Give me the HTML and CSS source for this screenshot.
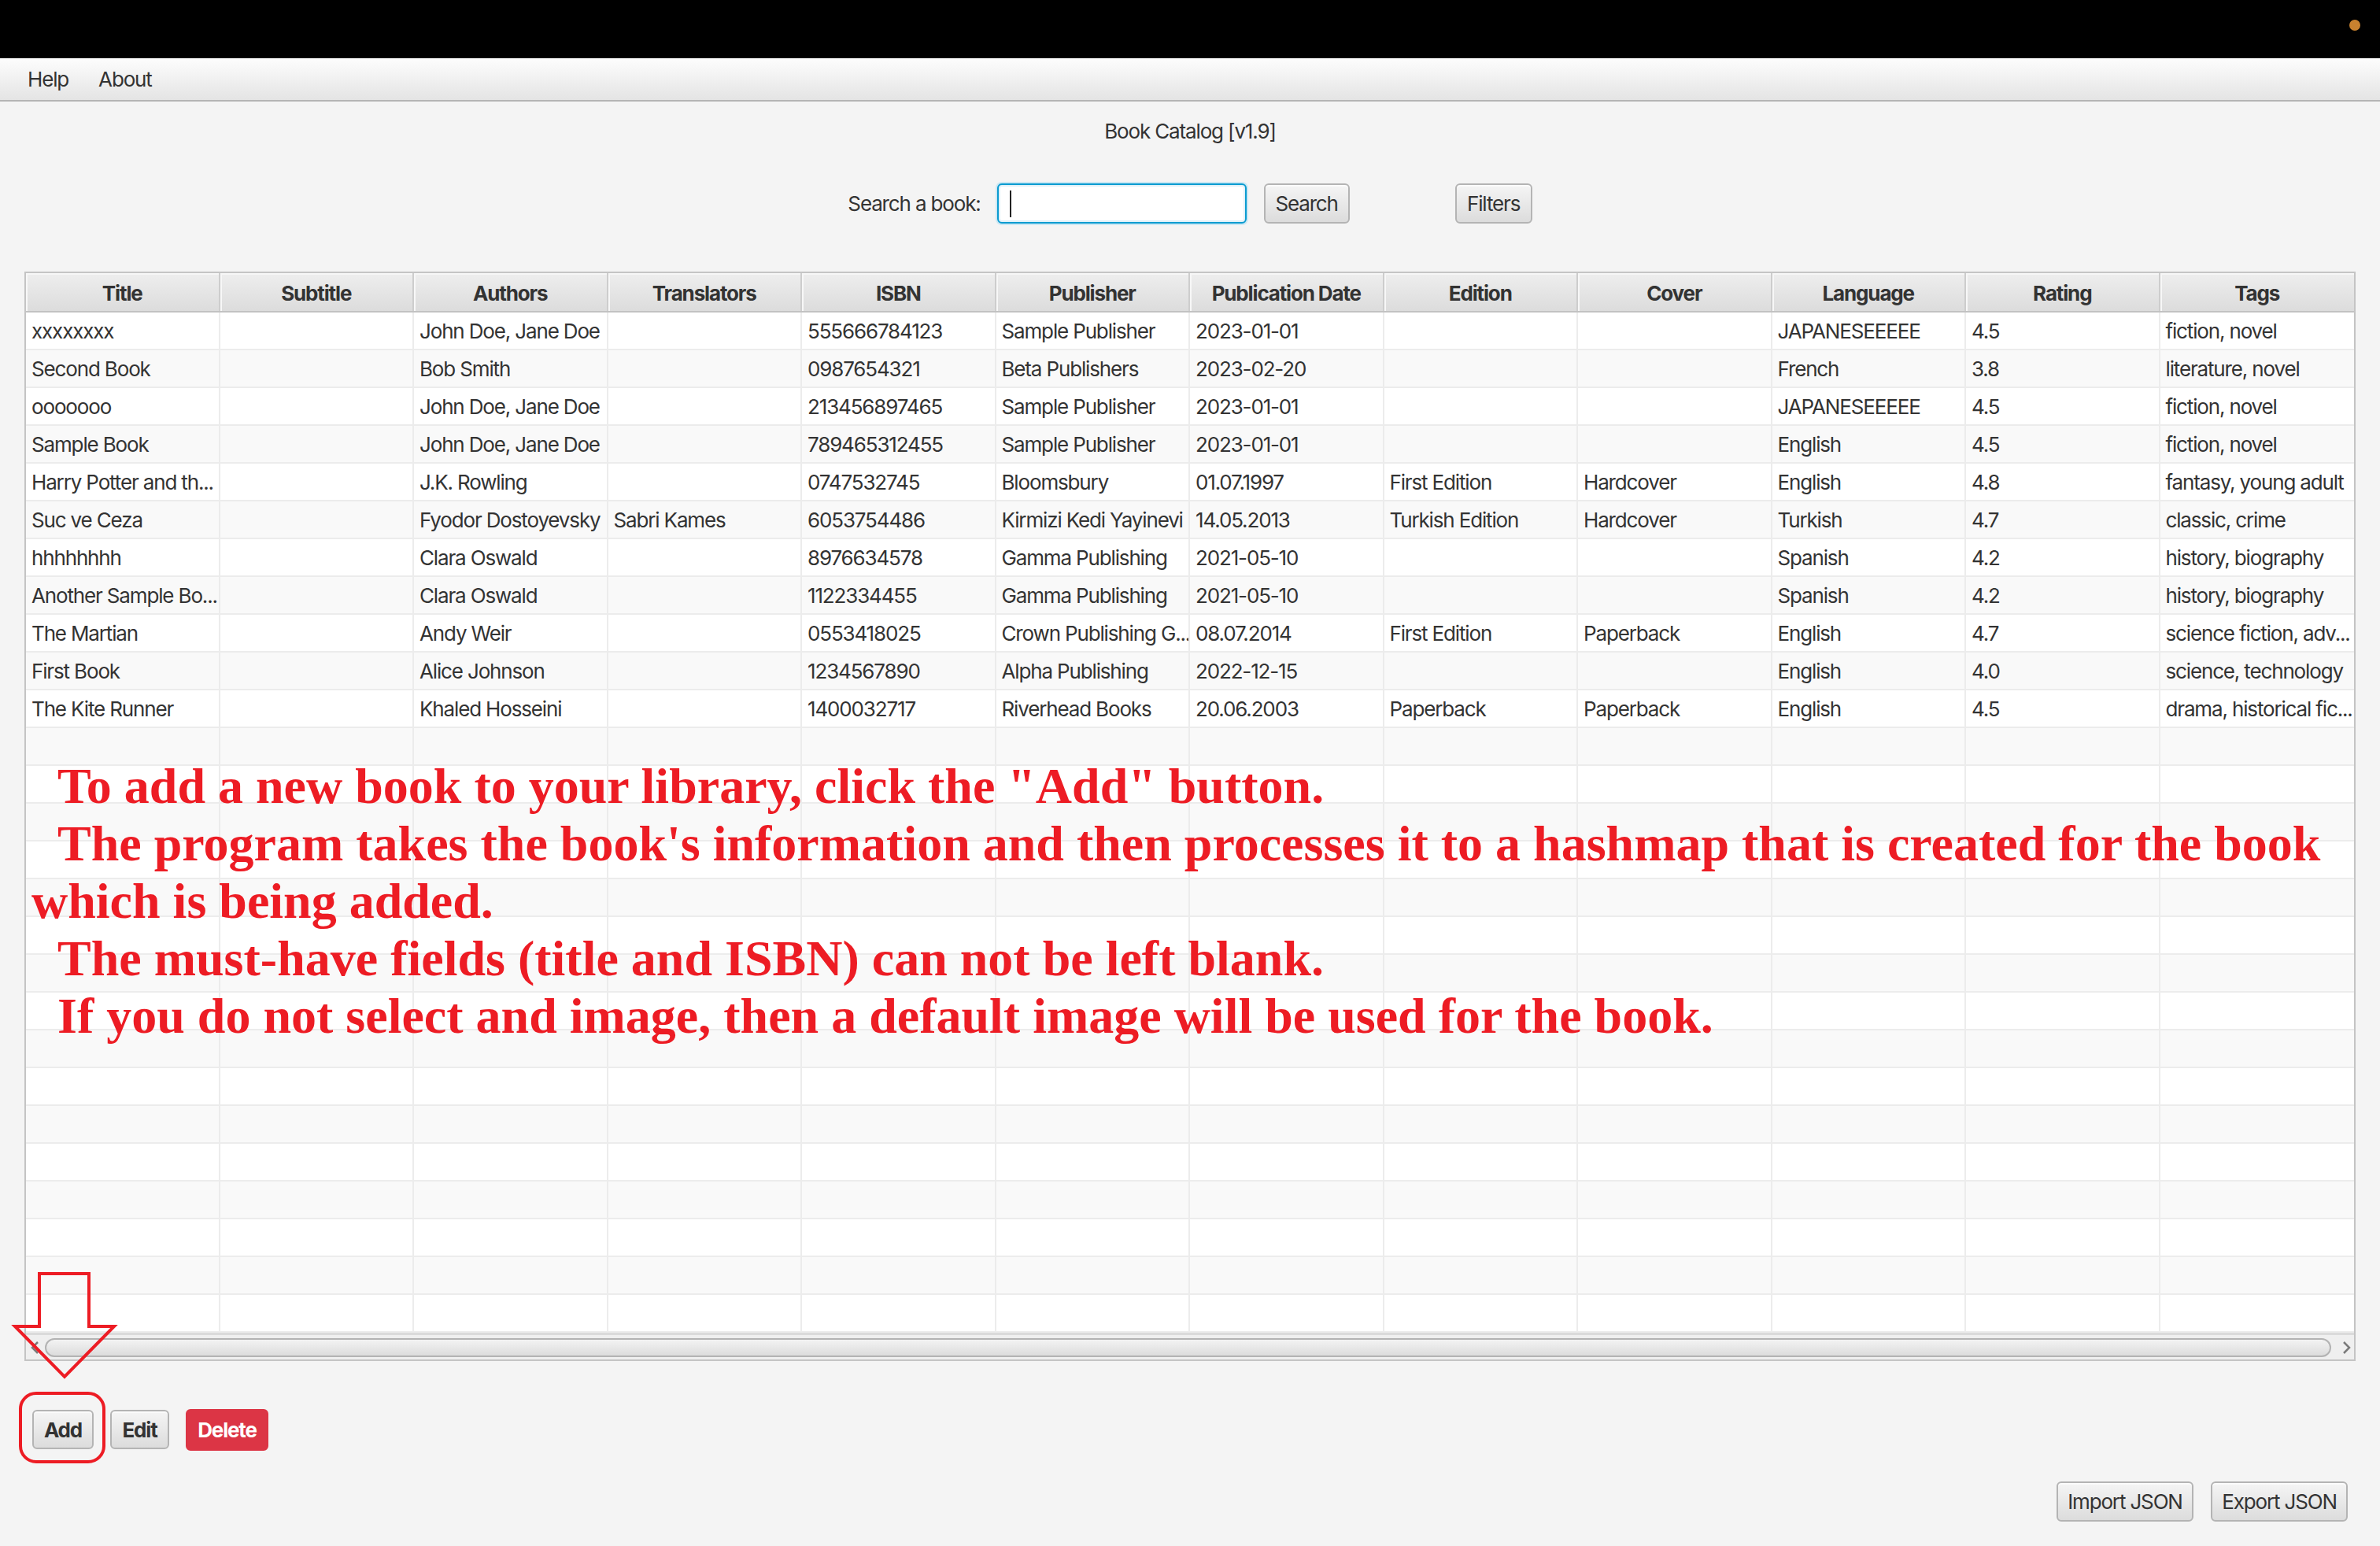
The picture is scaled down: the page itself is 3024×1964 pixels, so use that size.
FILE: index.html
```html
<!DOCTYPE html>
<html lang="en">
<head>
<meta charset="utf-8">
<title>Book Catalog [v1.9]</title>
<link rel="stylesheet" href="styles.css">
</head>
<body>
<div class="app">
  <header class="titlebar"><span class="dot"></span></header>
  <nav class="menubar">
    <span class="menu-item">Help</span>
    <span class="menu-item">About</span>
  </nav>
  <main class="content">
    <h1 class="app-title">Book Catalog [v1.9]</h1>
    <div class="search-row">
      <label class="search-label">Search a book:</label>
      <div class="search-field"><span class="caret"></span></div>
      <button class="btn btn-search">Search</button>
      <button class="btn btn-filters">Filters</button>
    </div>

    <div class="table">
      <div class="thead">
        <div class="th">Title</div><div class="th">Subtitle</div><div class="th">Authors</div><div class="th">Translators</div><div class="th">ISBN</div><div class="th">Publisher</div><div class="th">Publication Date</div><div class="th">Edition</div><div class="th">Cover</div><div class="th">Language</div><div class="th">Rating</div><div class="th">Tags</div>
      </div>
      <div class="tbody">
        <div class="tr"><div class="td">xxxxxxxx</div><div class="td"></div><div class="td">John Doe, Jane Doe</div><div class="td"></div><div class="td">555666784123</div><div class="td">Sample Publisher</div><div class="td">2023-01-01</div><div class="td"></div><div class="td"></div><div class="td">JAPANESEEEEE</div><div class="td">4.5</div><div class="td">fiction, novel</div></div>
        <div class="tr"><div class="td">Second Book</div><div class="td"></div><div class="td">Bob Smith</div><div class="td"></div><div class="td">0987654321</div><div class="td">Beta Publishers</div><div class="td">2023-02-20</div><div class="td"></div><div class="td"></div><div class="td">French</div><div class="td">3.8</div><div class="td">literature, novel</div></div>
        <div class="tr"><div class="td">ooooooo</div><div class="td"></div><div class="td">John Doe, Jane Doe</div><div class="td"></div><div class="td">213456897465</div><div class="td">Sample Publisher</div><div class="td">2023-01-01</div><div class="td"></div><div class="td"></div><div class="td">JAPANESEEEEE</div><div class="td">4.5</div><div class="td">fiction, novel</div></div>
        <div class="tr"><div class="td">Sample Book</div><div class="td"></div><div class="td">John Doe, Jane Doe</div><div class="td"></div><div class="td">789465312455</div><div class="td">Sample Publisher</div><div class="td">2023-01-01</div><div class="td"></div><div class="td"></div><div class="td">English</div><div class="td">4.5</div><div class="td">fiction, novel</div></div>
        <div class="tr"><div class="td">Harry Potter and th...</div><div class="td"></div><div class="td">J.K. Rowling</div><div class="td"></div><div class="td">0747532745</div><div class="td">Bloomsbury</div><div class="td">01.07.1997</div><div class="td">First Edition</div><div class="td">Hardcover</div><div class="td">English</div><div class="td">4.8</div><div class="td">fantasy, young adult</div></div>
        <div class="tr"><div class="td">Suc ve Ceza</div><div class="td"></div><div class="td">Fyodor Dostoyevsky</div><div class="td">Sabri Kames</div><div class="td">6053754486</div><div class="td">Kirmizi Kedi Yayinevi</div><div class="td">14.05.2013</div><div class="td">Turkish Edition</div><div class="td">Hardcover</div><div class="td">Turkish</div><div class="td">4.7</div><div class="td">classic, crime</div></div>
        <div class="tr"><div class="td">hhhhhhhh</div><div class="td"></div><div class="td">Clara Oswald</div><div class="td"></div><div class="td">8976634578</div><div class="td">Gamma Publishing</div><div class="td">2021-05-10</div><div class="td"></div><div class="td"></div><div class="td">Spanish</div><div class="td">4.2</div><div class="td">history, biography</div></div>
        <div class="tr"><div class="td">Another Sample Bo...</div><div class="td"></div><div class="td">Clara Oswald</div><div class="td"></div><div class="td">1122334455</div><div class="td">Gamma Publishing</div><div class="td">2021-05-10</div><div class="td"></div><div class="td"></div><div class="td">Spanish</div><div class="td">4.2</div><div class="td">history, biography</div></div>
        <div class="tr"><div class="td">The Martian</div><div class="td"></div><div class="td">Andy Weir</div><div class="td"></div><div class="td">0553418025</div><div class="td">Crown Publishing G...</div><div class="td">08.07.2014</div><div class="td">First Edition</div><div class="td">Paperback</div><div class="td">English</div><div class="td">4.7</div><div class="td">science fiction, adv...</div></div>
        <div class="tr"><div class="td">First Book</div><div class="td"></div><div class="td">Alice Johnson</div><div class="td"></div><div class="td">1234567890</div><div class="td">Alpha Publishing</div><div class="td">2022-12-15</div><div class="td"></div><div class="td"></div><div class="td">English</div><div class="td">4.0</div><div class="td">science, technology</div></div>
        <div class="tr"><div class="td">The Kite Runner</div><div class="td"></div><div class="td">Khaled Hosseini</div><div class="td"></div><div class="td">1400032717</div><div class="td">Riverhead Books</div><div class="td">20.06.2003</div><div class="td">Paperback</div><div class="td">Paperback</div><div class="td">English</div><div class="td">4.5</div><div class="td">drama, historical fic...</div></div>
        <div class="filler">
          <span></span><span></span><span></span><span></span><span></span><span></span><span></span><span></span><span></span><span></span><span></span><span></span>
        </div>
      </div>
      <div class="hscroll">
        <svg class="chev" width="24" height="20" viewBox="0 0 24 20"><path d="M15 3 L8 10 L15 17" fill="none" stroke="#7a7a7a" stroke-width="2.5"/></svg>
        <div class="thumb"></div>
        <svg class="chev" width="29" height="20" viewBox="0 0 29 20"><path d="M16 3 L23 10 L16 17" fill="none" stroke="#7a7a7a" stroke-width="2.5"/></svg>
      </div>
    </div>

    <div class="actions">
      <button class="btn btn-bold btn-add">Add</button>
      <button class="btn btn-bold btn-edit">Edit</button>
      <button class="btn btn-danger">Delete</button>
    </div>
    <div class="io">
      <button class="btn btn-io">Import JSON</button>
      <button class="btn btn-io">Export JSON</button>
    </div>
  </main>

  <div class="note">
    <p>To add a new book to your library, click the "Add" button.</p>
    <p>The program takes the book's information and then processes it to a hashmap that is created for the book which is being added.</p>
    <p>The must-have fields (title and ISBN) can not be left blank.</p>
    <p>If you do not select and image, then a default image will be used for the book.</p>
  </div>

  <svg class="marks" width="170" height="270" viewBox="0 0 170 270">
    <polygon points="50,18 113,18 113,85 145,85 82,149 19,85 50,85" fill="none" stroke="#ed1c24" stroke-width="4" stroke-linejoin="miter"/>
    <rect x="26" y="170" width="106" height="87" rx="20" ry="20" fill="none" stroke="#ed1c24" stroke-width="4"/>
  </svg>
</div>
</body>
</html>
```
FILE: styles.css
```css
html, body {
  margin: 0;
  padding: 0;
}
body {
  width: 3024px;
  height: 1964px;
  overflow: hidden;
  background: #f4f4f4;
  font-family: Inter, "Noto Sans", sans-serif;
  font-size: 26px;
  letter-spacing: -1.15px;
  color: #333333;
}
.app {
  position: relative;
  width: 3024px;
  height: 1964px;
}

/* window title bar */
.titlebar {
  height: 74px;
  background: #000;
  display: flex;
  justify-content: flex-end;
  align-items: flex-start;
  padding: 25px 25px 0 0;
  box-sizing: border-box;
}
.dot {
  width: 14px;
  height: 14px;
  border-radius: 50%;
  background: #c8812f;
}

/* menu bar */
.menubar {
  height: 55px;
  box-sizing: border-box;
  border-bottom: 2px solid #b5b5b5;
  background: linear-gradient(#fdfdfd, #e4e4e4);
  display: flex;
  align-items: center;
  padding-left: 35px;
  gap: 38px;
  line-height: 55px;
}

.content {
  padding: 0 31px;
}

.app-title {
  margin: 0;
  padding-top: 22px;
  font-size: 26px;
  font-weight: normal;
  text-align: center;
  line-height: 32px;
}

/* search */
.search-row {
  margin-top: 50px;
  height: 51px;
  display: flex;
  justify-content: center;
  align-items: center;
}
.search-label {
  margin-right: 21px;
}
.search-field {
  width: 317px;
  height: 51px;
  box-sizing: border-box;
  border: 2px solid #0a9bd0;
  border-radius: 6px;
  background: #fff;
  box-shadow: 0 0 0 2px #cbe7f3, inset 0 0 0 2px #dff0f8;
  display: flex;
  align-items: center;
  padding-left: 14px;
  margin-right: 22px;
}
.caret {
  width: 2px;
  height: 34px;
  background: #222;
}
.btn {
  height: 51px;
  box-sizing: border-box;
  border: 2px solid #b4b4b4;
  border-radius: 6px;
  background: linear-gradient(#f5f5f5, #dcdcdc);
  box-shadow: inset 0 2px 0 #fbfbfb;
  font: inherit;
  letter-spacing: inherit;
  color: #333;
  padding: 0;
  text-align: center;
  cursor: default;
}
.btn-search {
  width: 109px;
}
.btn-filters {
  width: 98px;
  margin-left: 134px;
}

/* table */
.table {
  margin-top: 61px;
  border: 2px solid #c4c4c4;
  background: #fff;
}
.thead {
  display: grid;
  grid-template-columns: repeat(12, minmax(0, 1fr));
  height: 50px;
  box-sizing: border-box;
  border-bottom: 2px solid #c2c2c2;
}
.th {
  background: linear-gradient(#eeeeee, #dcdcdc);
  border-right: 2px solid #cdcdcd;
  box-shadow: inset 2px 2px 0 #f7f7f7;
  text-align: center;
  font-weight: bold;
  line-height: 51px;
  white-space: nowrap;
  overflow: hidden;
}
.th:last-child {
  border-right: 0;
}
.tr {
  display: grid;
  grid-template-columns: repeat(12, minmax(0, 1fr));
  height: 48px;
  box-sizing: border-box;
  border-bottom: 2px solid #ececec;
  background: #fff;
}
.tr:nth-child(even) {
  background: #f9f9f9;
}
.td {
  border-right: 2px solid #ececec;
  padding-left: 7px;
  line-height: 48px;
  white-space: nowrap;
  overflow: hidden;
}
.td:last-child {
  border-right: 0;
}
.filler {
  display: grid;
  grid-template-columns: repeat(12, minmax(0, 1fr));
  height: 768px;
  background: repeating-linear-gradient(to bottom,
    #f9f9f9 0, #f9f9f9 46px, #ececec 46px, #ececec 48px,
    #ffffff 48px, #ffffff 94px, #ececec 94px, #ececec 96px);
}
.filler span {
  border-right: 2px solid #ececec;
}
.filler span:last-child {
  border-right: 0;
}
.hscroll {
  height: 34px;
  box-sizing: border-box;
  border-top: 3px solid #dadada;
  background: #efefef;
  display: flex;
  align-items: center;
}
.chev {
  flex: none;
}
.thumb {
  flex: 1;
  height: 24px;
  box-sizing: border-box;
  border: 2px solid #b3b3b3;
  border-radius: 12px;
  background: linear-gradient(#f3f3f3, #dcdcdc);
}

/* bottom buttons */
.actions {
  margin-top: 62px;
  padding-left: 10px;
  display: flex;
  align-items: flex-start;
  gap: 21px;
}
.actions .btn {
  height: 50px;
}
.btn-bold {
  font-weight: bold;
}
.btn-add {
  width: 78px;
}
.btn-edit {
  width: 75px;
}
.btn-danger {
  width: 105px;
  font-weight: bold;
  background: #dc3545;
  border-color: #dc3545;
  box-shadow: none;
  color: #fff;
}
.actions .btn-danger {
  height: 53px;
  margin-top: -1px;
}
.io {
  margin-top: 39px;
  padding-right: 10px;
  display: flex;
  justify-content: flex-end;
  gap: 22px;
}
.btn-io {
  width: 174px;
}

/* annotation overlay */
.note {
  position: absolute;
  left: 40px;
  top: 962px;
  width: 2960px;
  font-family: "Liberation Serif", "Times New Roman", serif;
  font-weight: bold;
  font-size: 64px;
  line-height: 73px;
  letter-spacing: 0;
  color: #ed1c24;
}
.note p {
  margin: 0;
  text-indent: 33px;
}
.marks {
  position: absolute;
  left: 0;
  top: 1600px;
}
```
